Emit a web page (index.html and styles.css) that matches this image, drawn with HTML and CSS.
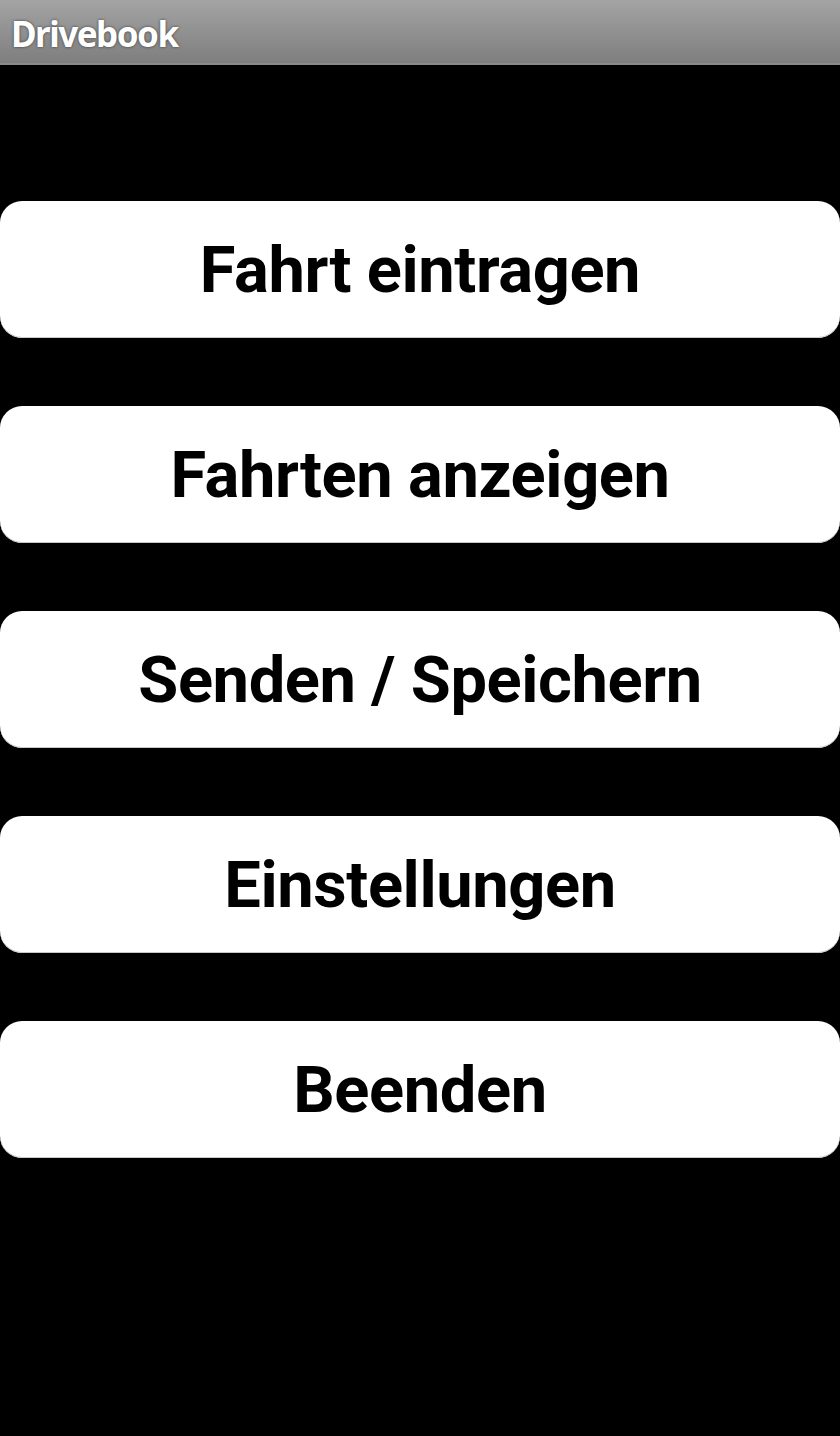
FILE: index.html
```html
<!DOCTYPE html>
<html lang="de">
<head>
<meta charset="utf-8">
<title>Drivebook</title>
<link rel="stylesheet" href="styles.css">
</head>
<body>
<header class="titlebar"><span class="title">Drivebook</span></header>
<main class="menu">
  <button class="menu-btn">Fahrt eintragen</button>
  <button class="menu-btn">Fahrten anzeigen</button>
  <button class="menu-btn">Senden / Speichern</button>
  <button class="menu-btn">Einstellungen</button>
  <button class="menu-btn">Beenden</button>
</main>
</body>
</html>
```
FILE: styles.css
```css
html, body {
  margin: 0;
  padding: 0;
  background: #000;
  height: 100%;
}
body {
  width: 840px;
  min-height: 1436px;
  font-family: Roboto, "Noto Sans", sans-serif;
}
.titlebar {
  height: 63px;
  background: linear-gradient(#a4a4a4, #7e7e7e);
  border-bottom: 2px solid #8a8a8a;
  display: flex;
  align-items: center;
  padding-left: 11px;
  box-sizing: content-box;
}
.title {
  font-family: "Noto Sans", "Open Sans", "DejaVu Sans", sans-serif;
  font-weight: 700;
  font-size: 35px;
  letter-spacing: -1.5px;
  color: #fff;
  text-shadow: 0 0 3px rgba(0,0,0,0.6);
  margin-top: 3px;
}
.menu {
  display: flex;
  flex-direction: column;
  gap: 68px;
  padding-top: 136px;
}
.menu-btn {
  height: 137px;
  width: 840px;
  border: none;
  border-radius: 22px;
  background: #fff;
  color: #000;
  font-family: Roboto, "Noto Sans", sans-serif;
  font-weight: 700;
  font-size: 65px;
  letter-spacing: -0.4px;
  padding: 0;
  margin: 0;
  box-shadow: inset 0 -1px 0 #c8c8c8;
}
```
